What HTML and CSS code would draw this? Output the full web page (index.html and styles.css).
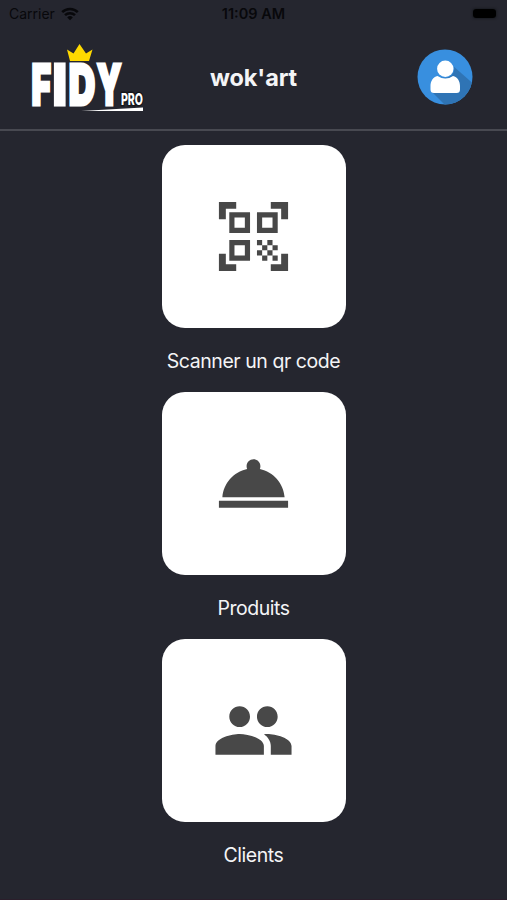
FILE: index.html
```
<!DOCTYPE html>
<html lang="fr">
<head>
	<meta charset="UTF-8">
	<title>Fidy Pro</title>
	<link rel="stylesheet" href="styles.css">
</head>
<body>
	<div class="status">
		<div class="carrier">
			<span>Carrier</span>
			<svg width="18" height="14" viewBox="0 0 18 14">
				<path d="M1.2 5.2a11 11 0 0 1 15.6 0M4 8.2a7.2 7.2 0 0 1 10 0" fill="none" stroke="#08080b" stroke-width="2.5"/>
				<path d="M9 13.2L6.2 10.4a4 4 0 0 1 5.6 0z" fill="#08080b"/>
			</svg>
		</div>
		<div class="time">11:09 AM</div>
		<div class="battery"><span></span></div>
	</div>
	<header class="header">
		<svg class="logo" width="116" height="84" viewBox="0 0 116 84">
			<g class="fidy">
				<text x="1.500" y="65" textLength="19.500" lengthAdjust="spacingAndGlyphs">F</text>
				<text x="23" y="65" textLength="13.500" lengthAdjust="spacingAndGlyphs">I</text>
				<text x="38.800" y="65" textLength="26.500" lengthAdjust="spacingAndGlyphs">D</text>
				<text x="66.800" y="65" textLength="24.800" lengthAdjust="spacingAndGlyphs">Y</text>
			</g>
			<path class="crown" d="M37 9.500l6.500 4 6-9.500 6.500 9.500 6.500-4-3.500 11.500h-19z"/>
			<text class="pro" x="91" y="64.500" textLength="22" lengthAdjust="spacingAndGlyphs">PRO</text>
			<path d="M51 71l62-3.500v3.500z" fill="#fff"/>
		</svg>
		<h1 class="title">wok'art</h1>
		<svg class="avatar" width="56" height="56" viewBox="0 0 56 56">
			<defs>
				<clipPath id="disc"><circle cx="28" cy="28" r="27.500"/></clipPath>
			</defs>
			<circle cx="28" cy="28" r="27.500" fill="#388fdf"/>
			<path d="M35 16l25 22v22H32L15 43z" fill="#2f74b5" clip-path="url(#disc)"/>
			<path d="M20.500 27C16 28 13.500 32 13.500 37v3.500q0 3.500 3.500 3.500h22.500q3.500 0 3.500-3.500V37c0-5-2.500-9-7-10q-7.500 5-15.500 0z" fill="#fff"/>
			<circle cx="28.300" cy="20" r="9" fill="#388fdf"/>
			<circle cx="28.300" cy="19.800" r="8.200" fill="#fff"/>
		</svg>
	</header>
	<main class="menu">
		<a class="item">
			<span class="card">
				<svg class="icon" viewBox="0 0 24 24"><path d="M9.500 6.500v3h-3v-3h3M11 5H5v6h6V5zM9.500 14.500v3h-3v-3h3M11 13H5v6h6v-6zM17.500 6.500v3h-3v-3h3M19 5h-6v6h6V5zM13 13h1.500v1.500H13zM14.500 14.500H16V16h-1.500zM16 13h1.500v1.500H16zM13 16h1.500v1.500H13zM14.500 17.500H16V19h-1.500zM16 16h1.500v1.500H16zM17.500 14.500H19V16h-1.500zM17.500 17.500H19V19h-1.500zM22 7h-2V4h-3V2h5v5zM22 22v-5h-2v3h-3v2h5zM2 22h5v-2H4v-3H2v5zM2 2v5h2V4h3V2H2z"/></svg>
			</span>
			<span class="label">Scanner un qr code</span>
		</a>
		<a class="item">
			<span class="card">
				<svg class="icon" viewBox="0 0 24 24"><path d="M2 17h20v2H2zm11.840-9.210c.1-.24.16-.51.16-.79 0-1.100-.9-2-2-2s-2 .9-2 2c0 .28.06.55.16.79C6.250 8.600 3.270 11.930 3 16h18c-.27-4.070-3.250-7.400-7.160-8.210z"/></svg>
			</span>
			<span class="label">Produits</span>
		</a>
		<a class="item">
			<span class="card">
				<svg class="icon" viewBox="0 0 24 24"><path d="M16 11c1.660 0 2.990-1.340 2.990-3S17.660 5 16 5s-3 1.340-3 3 1.340 3 3 3zm-8 0c1.660 0 2.990-1.340 2.990-3S9.660 5 8 5 5 6.340 5 8s1.340 3 3 3zm0 2c-2.330 0-7 1.170-7 3.500V19h14v-2.500c0-2.330-4.670-3.500-7-3.500zm8 0c-.29 0-.62.02-.97.05 1.160.84 1.970 1.970 1.970 3.450V19h6v-2.500c0-2.330-4.670-3.500-7-3.500z"/></svg>
			</span>
			<span class="label">Clients</span>
		</a>
	</main>
</body>
</html>
```

FILE: styles.css
```
* {
	box-sizing: border-box;
}
body {
	margin: 0;
	height: 900px;
	overflow: hidden;
	background-color: #25262f;
	border-bottom: 1px solid #2b1e2b;
	color: #f4f4f6;
	font-family: Inter, Roboto, sans-serif;
}
.status {
	display: grid;
	grid-template-columns: 1fr auto 1fr;
	align-items: center;
	height: 27px;
	padding: 0 11px 0 9px;
	color: #08080b;
	font-size: 14px;
}
.carrier {
	display: flex;
	align-items: center;
	gap: 6px;
}
.time {
	padding-left: 2px;
	font-size: 14.5px;
	font-weight: 600;
}
.battery {
	justify-self: end;
	border-radius: 3px;
	box-shadow: 0 0 2px 1px #1b1c22;
}
.battery span {
	display: block;
	width: 23px;
	height: 9px;
	border-radius: 3px;
	background-color: #000;
}
.header {
	display: grid;
	grid-template-columns: 1fr auto 1fr;
	align-items: center;
	height: 104px;
	padding: 0 34px 0 30px;
	border-bottom: 2px solid #484951;
}
.logo {
	align-self: start;
	margin-top: 13px;
	overflow: visible;
}
.crown {
	fill: #ffd900;
}
.fidy text {
	fill: #fff;
	stroke: #fff;
	stroke-width: 3px;
	font-size: 56px;
	font-weight: 900;
}
.pro {
	fill: #fff;
	stroke: #15161b;
	stroke-width: 3px;
	paint-order: stroke;
	font-size: 16px;
	font-weight: 800;
}
.title {
	margin: 0;
	padding-left: 4px;
	font-size: 23.5px;
	font-weight: 700;
	line-height: 30px;
	letter-spacing: -0.1px;
}
.avatar {
	justify-self: end;
	margin-bottom: 2px;
}
.menu {
	display: flex;
	flex-direction: column;
	align-items: center;
	padding-top: 14px;
}
.item {
	display: flex;
	flex-direction: column;
	align-items: center;
	height: 247px;
}
.card {
	display: flex;
	align-items: center;
	justify-content: center;
	width: 184px;
	height: 183px;
	border-radius: 23px;
	background-color: #fff;
}
.icon {
	width: 83px;
	height: 83px;
	fill: #484848;
}
.label {
	margin-top: 20px;
	font-size: 19.5px;
	line-height: 26px;
	letter-spacing: -0.45px;
}
```
